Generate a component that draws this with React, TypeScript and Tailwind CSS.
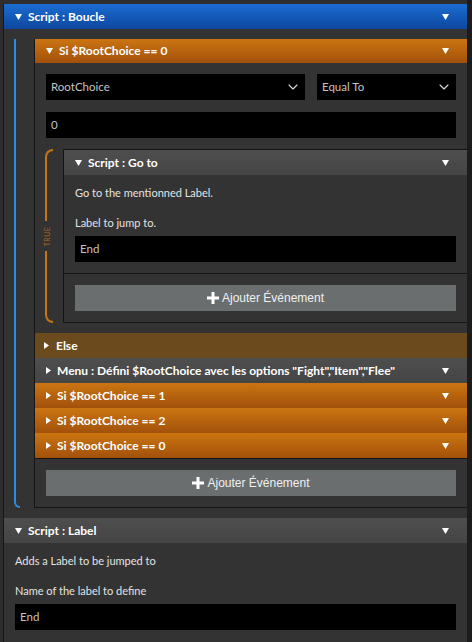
import React from 'react';
import { ChevronDown } from 'lucide-react';

const ui = "font-['Lato','Noto_Sans',sans-serif]";

const DownTri = () => (
  <svg width="7" height="6" viewBox="0 0 7 6" className="shrink-0">
    <path d="M0 0h7L3.5 6z" fill="#fff" />
  </svg>
);

const RightTri = () => (
  <svg width="5" height="7" viewBox="0 0 5 7" className="shrink-0">
    <path d="M0 0l5 3.5L0 7z" fill="#fff" />
  </svg>
);

const tones = {
  blue: 'bg-linear-to-b from-[#1b6dd3] to-[#0d479e]',
  orange: 'bg-linear-to-b from-[#cb7511] to-[#a2510b]',
  gray: 'bg-linear-to-b from-[#4e4e4e] to-[#454545]',
  brown: 'bg-[#6b4a1e]',
};

const Bar: React.FC<{
  title: string;
  tone: keyof typeof tones;
  open?: boolean;
  menu?: boolean;
  h?: string;
}> = ({ title, tone, open = true, menu = true, h = 'h-[25px]' }) => (
  <div className={`${tones[tone]} ${h} flex items-center pl-[11px] pr-[18px] gap-[6px]`}>
    {open ? <DownTri /> : <RightTri />}
    <span className="flex-1 text-white font-bold text-[12px] whitespace-nowrap">{title}</span>
    {menu && <DownTri />}
  </div>
);

const Field: React.FC<{ value: string; className?: string }> = ({ value, className = '' }) => (
  <div className={`h-[26px] bg-black flex items-center px-[5px] text-[11.5px] text-[#c4c4c4] ${className}`}>{value}</div>
);

const Select: React.FC<{ value: string; className?: string }> = ({ value, className = '' }) => (
  <div className={`h-[26px] bg-black flex items-center justify-between pl-[5px] pr-[4px] text-[11.5px] text-[#c4c4c4] ${className}`}>
    <span>{value}</span>
    <ChevronDown size={16} strokeWidth={1.6} color="#dcdcdc" />
  </div>
);

const AddButton = () => (
  <div className="h-[26px] bg-[#6a6e6f] flex items-center justify-center gap-[3px] text-[12px] text-[#f0f0f0] font-['Liberation_Sans',Arial,sans-serif]">
    <svg width="12" height="12" viewBox="0 0 12 12">
      <path d="M4.5 0h3v4.5H12v3H7.5V12h-3V7.5H0v-3h4.5z" fill="#fff" />
    </svg>
    <span>Ajouter Événement</span>
  </div>
);

export default function App() {
  return (
    <div className={`${ui} w-[472px] h-[642px] overflow-hidden bg-[#2e2e2e] flex`}>
      <div className="flex-1 pt-[4px] pl-[3px] flex flex-col">
        <div className="border-l border-[#161616] flex flex-col flex-1">
          {/* Script : Boucle */}
          <Bar title="Script : Boucle" tone="blue" />
          <div className="bg-[#333333] pt-[10px] pb-[10px] pl-[10px] flex">
            <div className="w-[20px] shrink-0">
              <div className="w-[6px] h-full border-l-2 border-b-2 border-[#2b8de6] rounded-bl-[7px]" />
            </div>
            <div className="flex-1 border-l border-b border-[#151515] flex flex-col">
              <Bar title="Si $RootChoice == 0" tone="orange" h="h-[24px]" />
              <div className="pt-[11px] pb-[10px] pl-[11px] flex flex-col">
                <div className="flex gap-[12px] mr-[11px]">
                  <Select value="RootChoice" className="w-[259px]" />
                  <Select value="Equal To" className="flex-1" />
                </div>
                <Field value="0" className="mt-[12px] mr-[11px]" />
                <div className="mt-[11px] flex">
                  <div className="w-[18px] shrink-0 -ml-px flex flex-col items-start">
                    <div className="w-[8px] flex-1 border-l-2 border-t-2 border-[#c67415] rounded-tl-[8px]" />
                    <div className="h-[30px] w-[6px] flex items-center justify-center">
                      <span className="-rotate-90 text-[7px] tracking-[0.5px] text-[#a9671d] leading-none">TRUE</span>
                    </div>
                    <div className="w-[8px] flex-1 border-l-2 border-b-2 border-[#c67415] rounded-bl-[8px]" />
                  </div>
                  <div className="flex-1 border border-r-0 border-[#141414] flex flex-col">
                    <Bar title="Script : Go to" tone="gray" />
                    <div className="pt-[10px] pb-[11px] pl-[11px] pr-[11px] border-b border-[#141414] text-[11px] text-[#e4e4e4]">
                      <div className="leading-[16px]">Go to the mentionned Label.</div>
                      <div className="leading-[16px] mt-[14px]">Label to jump to.</div>
                      <Field value="End" className="mt-[5px]" />
                    </div>
                    <div className="pt-[11px] pb-[11px] pl-[11px] pr-[11px]">
                      <AddButton />
                    </div>
                  </div>
                </div>
              </div>
              <div className="h-[25px] bg-[#6b4a1e] flex items-center pl-[9px] gap-[7px]">
                <RightTri />
                <span className="text-white font-bold text-[12px]">Else</span>
              </div>
              <Bar title={'Menu : Défini $RootChoice avec les options "Fight","Item","Flee"'} tone="gray" open={false} />
              <Bar title="Si $RootChoice == 1" tone="orange" open={false} />
              <Bar title="Si $RootChoice == 2" tone="orange" open={false} />
              <Bar title="Si $RootChoice == 0" tone="orange" open={false} />
              <div className="border-t border-[#141414] p-[11px]">
                <AddButton />
              </div>
            </div>
          </div>

          {/* Script : Label */}
          <Bar title="Script : Label" tone="gray" />
          <div className="bg-[#333333] flex-1 pt-[10px] pl-[11px] pr-[11px] text-[11px] text-[#e4e4e4]">
            <div className="leading-[16px]">Adds a Label to be jumped to</div>
            <div className="leading-[16px] mt-[14px]">Name of the label to define</div>
            <Field value="End" className="mt-[5px]" />
          </div>
        </div>
      </div>
      <div className="w-[5px] shrink-0 bg-[#1c1c1c]" />
    </div>
  );
}
